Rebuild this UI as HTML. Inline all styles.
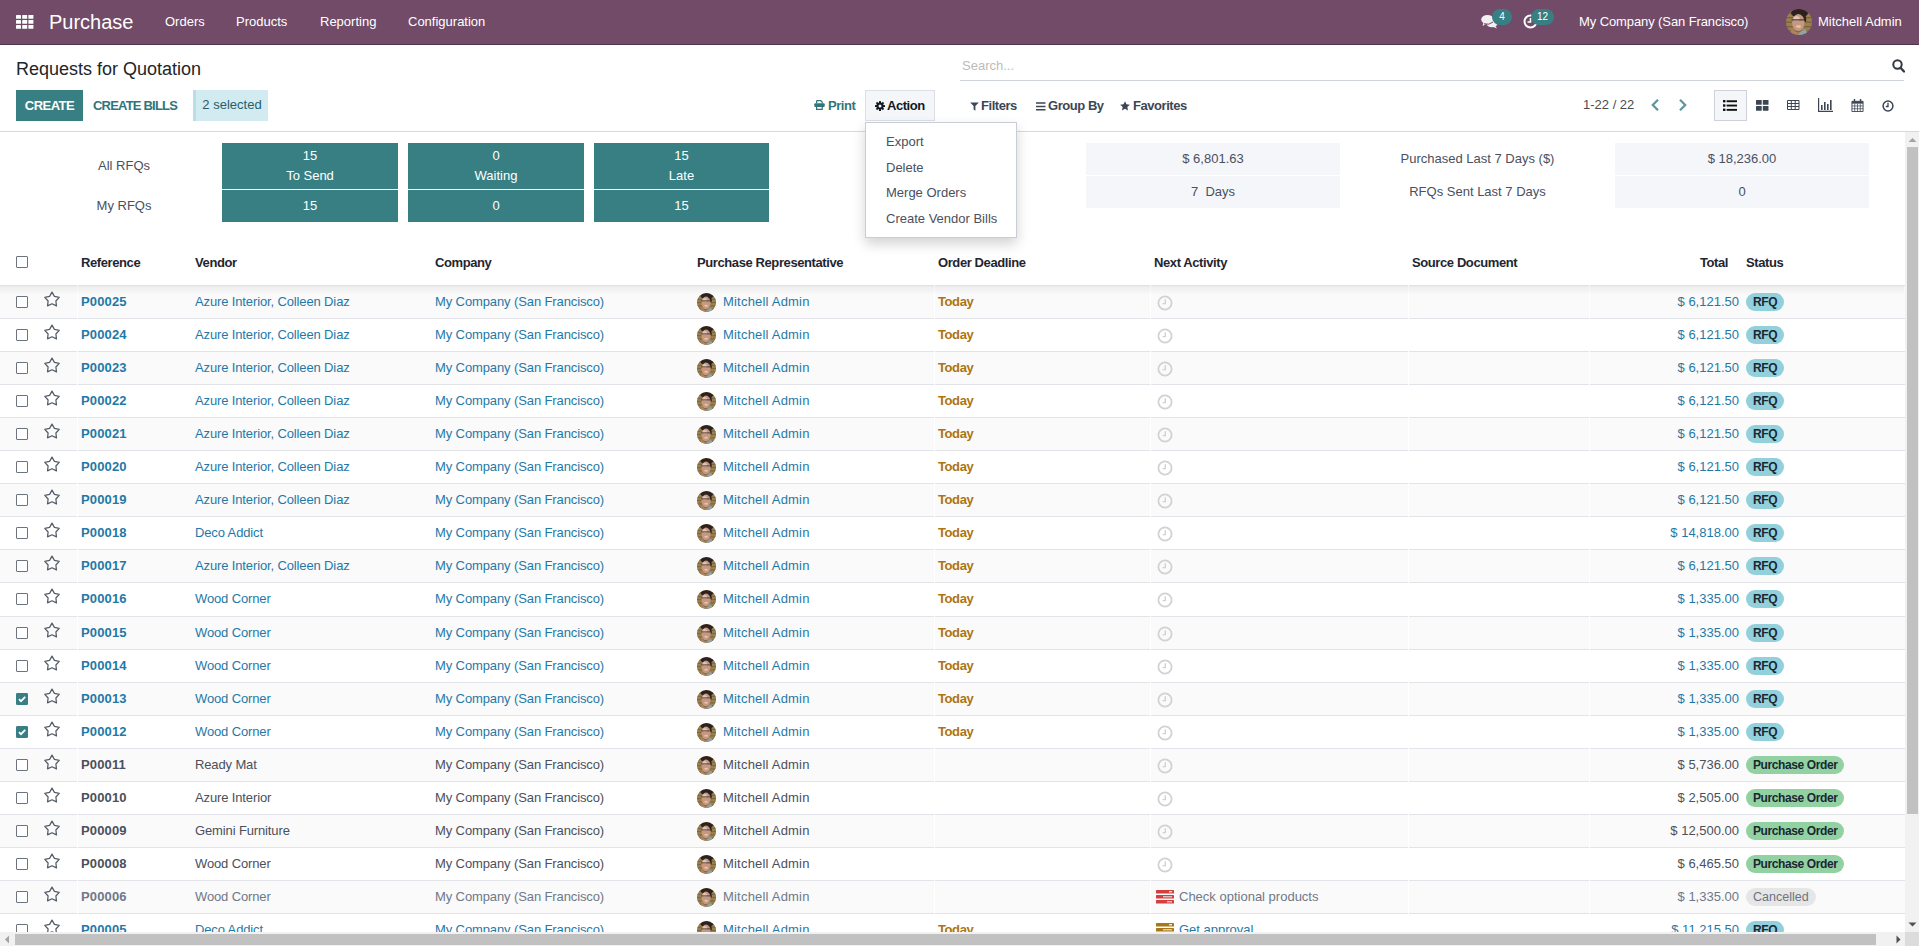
<!DOCTYPE html>
<html><head><meta charset="utf-8">
<style>
*{box-sizing:border-box;margin:0;padding:0}
html,body{width:1919px;height:946px;overflow:hidden;background:#fff}
body{position:relative;font-family:"Liberation Sans",sans-serif;font-size:13px;color:#495060}
.abs{position:absolute;white-space:nowrap}
/* navbar */
.nav{position:absolute;left:0;top:0;width:1919px;height:45px;background:#714b67;border-bottom:1px solid #4f3349;color:#fff}
.nav .t{position:absolute;white-space:nowrap;line-height:16px;top:14px;color:#fff}
.brand{font-size:20px;line-height:24px!important;top:10px!important}
.nbadge{position:absolute;height:16px;border-radius:8px;background:#387f84;color:#fff;font-size:10px;line-height:16px;text-align:center;top:9px}
.av{display:inline-block;border-radius:50%;background:radial-gradient(circle at 50% 42%,#e0b9a0 0,#c89479 22%,#6b4a34 45%,#8a6a48 62%,#5d5142 100%);vertical-align:middle}
/* control panel */
.title{position:absolute;left:16px;top:58px;font-size:18px;line-height:22px;color:#212529;white-space:nowrap}
.search{position:absolute;left:960px;top:50px;width:944px;height:31px;border-bottom:1px solid #ced4da}
.search .ph{position:absolute;left:2px;top:8px;color:#bcbcbc;font-size:13px;line-height:16px}
.btn{position:absolute;top:90px;height:31px;line-height:31px;font-weight:700;font-size:13px;white-space:nowrap}
.create{left:16px;width:67px;background:#387f84;color:#fff;text-align:center;letter-spacing:-0.5px}
.cbills{left:93px;color:#2f767c;letter-spacing:-0.8px}
.sel{left:193px;width:75px;background:#d1ebf0;border-left:3px solid #b7dfe7;color:#24606b;font-weight:400;text-align:center;line-height:29px}
.tool{position:absolute;top:98px;line-height:16px;white-space:nowrap;color:#3d4654;font-weight:700;letter-spacing:-0.45px}
.actbtn{position:absolute;left:865px;top:90px;width:70px;height:31px;background:#f5f6f9;border:1px solid #dcdfe5}
.cpline{position:absolute;left:0;top:131px;width:1919px;height:1px;background:#d6d9de}
/* dashboard */
.dl{position:absolute;white-space:nowrap;text-align:center;line-height:16px;color:#495060}
.tb{position:absolute;background:#387f84;color:#fff;text-align:center;line-height:20px}
.gb{position:absolute;background:#f5f6fa;text-align:center;color:#495060;line-height:32px}
/* table */
.th{position:absolute;top:255px;line-height:16px;font-weight:700;color:#1f2630;white-space:nowrap;letter-spacing:-0.4px}
.hline{position:absolute;left:0;top:285px;width:1905px;height:1px;background:#dee2e6}
.row{position:absolute;left:0;width:1905px;background:#fff}
.rb{position:absolute;left:0;width:1905px;height:1px;background:#e2e3e8}
.row.odd{background:#fafafa}
.row .c{position:absolute;top:0;height:32px;line-height:32px;white-space:nowrap}
.gap{position:absolute;top:-1px;width:1px;height:34px;background:#fff}
.c0{left:16px}
.cb{position:absolute;top:10px;left:0;width:12px;height:12px;border:1px solid #6c7480;border-radius:1px;background:#fff}
.cb.on{background:#387f84;border-color:#387f84}
.cb.on svg{position:absolute;left:-1px;top:-1px}
.c1{left:44px}
.star{position:absolute;top:5px;left:0}
.cref{left:81px;font-weight:700;letter-spacing:0.15px}
.cven{left:195px;letter-spacing:-0.13px}
.ccom{left:435px;letter-spacing:-0.11px}
.crep{left:697px}
.crep .av{position:absolute;left:0;top:7px}
.crep .rn{position:absolute;left:26px;letter-spacing:0.2px}
.cdl{left:938px}
.today{font-weight:700;color:#ad7410;letter-spacing:-0.4px}
.cact{left:1154px}
.clk svg{position:absolute;left:3px;top:9px}
.acti svg{position:absolute;left:2px;top:9px}
.actt{position:absolute;left:25px}
.ctot{right:166px}
.cst{left:1746px}
.bdg{position:absolute;top:7px;height:18px;line-height:18px;border-radius:9px;padding:0 7px;font-weight:700;font-size:12px;color:#1a2733;letter-spacing:-0.4px}
.bdg.rfq{background:#92d0dc}
.bdg.po{background:#92d2a2}
.bdg.cn{background:#e6e6e6;color:#6b7280;font-weight:400;font-size:12.5px;letter-spacing:0}
.info .c{color:#1f79a7}
.info .c.cref{color:#1f79a7}
.norm .c{color:#4a505c}
.norm .cref{color:#4a505c}
.muted .c{color:#6f7888}
/* scrollbars */
.vsb{position:absolute;left:1905px;top:132px;width:14px;height:800px;background:#f1f1f1}
.vth{position:absolute;left:1907px;top:147px;width:11px;height:667px;background:#c1c1c1}
.hsb{position:absolute;left:0;top:932px;width:1905px;height:14px;background:#f1f1f1}
.hth{position:absolute;left:15px;top:934px;width:1861px;height:11px;background:#c1c1c1}
.corner{position:absolute;left:1905px;top:932px;width:14px;height:14px;background:#dcdcdc}
/* dropdown */
.dd{position:absolute;left:865px;top:122px;width:152px;height:116px;background:#fff;border:1px solid #c9cdd5;box-shadow:0 6px 12px rgba(0,0,0,.175)}
.dd .it{position:absolute;left:20px;line-height:16px;color:#495060;white-space:nowrap}
</style></head><body>
<svg width="0" height="0" style="position:absolute"><defs>
<symbol id="avs" viewBox="0 0 26 26">
<clipPath id="avc"><circle cx="13" cy="13" r="13"/></clipPath>
<g clip-path="url(#avc)">
<rect width="26" height="26" fill="#9a8150"/>
<g fill="#6e5a36" opacity=".75"><rect y="3.5" width="26" height="1.3"/><rect y="8" width="26" height="1.3"/><rect y="12.5" width="26" height="1.3"/><rect y="17" width="26" height="1.3"/><rect y="21.5" width="26" height="1.3"/></g>
<ellipse cx="13.5" cy="4" rx="8.5" ry="4.6" fill="#2b2220"/>
<path d="M17 4 Q21 6 20 13 L17.5 12Z" fill="#2b2220"/>
<ellipse cx="12.3" cy="13.5" rx="6.2" ry="8.6" fill="#c7987f"/>
<ellipse cx="10.5" cy="9.5" rx="3.2" ry="2.6" fill="#e3cfc8" opacity=".8"/>
<path d="M5.5 10.8 H18.5" stroke="#4a3a36" stroke-width="1.3"/>
<ellipse cx="12.5" cy="17.5" rx="2.6" ry="1.3" fill="#e6c2b8"/>
<path d="M3 26 L6 20 Q10 22 12 26Z" fill="#b5805f"/>
<path d="M12 26 Q14 22 19 20 L23 26Z" fill="#8fa2a8"/>
</g>
</symbol></defs></svg>

<div class="nav">
  <svg class="abs" style="left:16px;top:15px" width="18" height="14" viewBox="0 0 18 14"><g fill="#fff"><rect x="0" y="0" width="5" height="3.8" rx=".4"/><rect x="6.2" y="0" width="5" height="3.8" rx=".4"/><rect x="12.4" y="0" width="5" height="3.8" rx=".4"/><rect x="0" y="5" width="5" height="3.8" rx=".4"/><rect x="6.2" y="5" width="5" height="3.8" rx=".4"/><rect x="12.4" y="5" width="5" height="3.8" rx=".4"/><rect x="0" y="10" width="5" height="3.8" rx=".4"/><rect x="6.2" y="10" width="5" height="3.8" rx=".4"/><rect x="12.4" y="10" width="5" height="3.8" rx=".4"/></g></svg>
  <div class="t brand" style="left:49px">Purchase</div>
  <div class="t" style="left:165px">Orders</div>
  <div class="t" style="left:236px">Products</div>
  <div class="t" style="left:320px">Reporting</div>
  <div class="t" style="left:408px">Configuration</div>

  <svg class="abs" style="left:1481px;top:14px" width="17" height="15" viewBox="0 0 17 15">
    <ellipse cx="6.5" cy="5.5" rx="6.3" ry="4.6" fill="#f3eef2"/><path d="M2.5 8.5 L1.5 12 L6 9.5Z" fill="#f3eef2"/>
    <ellipse cx="11" cy="9.5" rx="5.5" ry="3.8" fill="#f3eef2"/><path d="M14 11.5 L16 14.5 L11 12.5Z" fill="#f3eef2"/>
    <path d="M3 9.8 Q8 11.5 12 8" stroke="#714b67" stroke-width="1" fill="none"/>
  </svg>
  <div class="nbadge" style="left:1492px;width:20px">4</div>
  <svg class="abs" style="left:1523px;top:14px" width="15" height="15" viewBox="0 0 15 15">
    <circle cx="7.5" cy="7.5" r="6" fill="none" stroke="#fff" stroke-width="2"/><path d="M7.5 4 V8 H4.5" stroke="#fff" stroke-width="1.6" fill="none"/>
  </svg>
  <div class="nbadge" style="left:1531px;width:23px">12</div>
  <div class="t" style="left:1579px;letter-spacing:-0.1px">My Company (San Francisco)</div>
  <svg class="abs" style="left:1786px;top:9px" width="26" height="26"><use href="#avs"/></svg>
  <div class="t" style="left:1818px">Mitchell Admin</div>
</div>

<div class="title">Requests for Quotation</div>
<div class="search"><span class="ph">Search...</span>
  <svg class="abs" style="left:932px;top:9px" width="13" height="14" viewBox="0 0 13 14"><circle cx="5.5" cy="5.5" r="4.2" fill="none" stroke="#343a40" stroke-width="2"/><path d="M8.5 8.8 L12 12.5" stroke="#343a40" stroke-width="2.4" stroke-linecap="round"/></svg>
</div>

<div class="btn create">CREATE</div>
<div class="btn cbills">CREATE BILLS</div>
<div class="btn sel">2 selected</div>

<svg class="abs" style="left:814px;top:100px" width="11" height="10" viewBox="0 0 11 10"><path d="M2.6 3.2 V1.2 Q2.6 0.6 3.2 0.6 H6.8 L8.2 2 V3.2" fill="none" stroke="#2f767c" stroke-width="1.2"/><rect x="0.3" y="3.3" width="10.4" height="3.6" rx="1" fill="#2f767c"/><path d="M2.6 6.6 V9.3 H8.2 V6.6" fill="none" stroke="#2f767c" stroke-width="1.2"/></svg>
<div class="tool" style="left:828px;color:#2f767c">Print</div>
<div class="actbtn"></div>
<svg class="abs" style="left:875px;top:101px" width="10" height="10" viewBox="0 0 20 20"><g fill="#111a24"><rect x="8" y="0" width="4" height="20" rx=".5"/><rect x="8" y="0" width="4" height="20" rx=".5" transform="rotate(45 10 10)"/><rect x="8" y="0" width="4" height="20" rx=".5" transform="rotate(90 10 10)"/><rect x="8" y="0" width="4" height="20" rx=".5" transform="rotate(135 10 10)"/><circle cx="10" cy="10" r="7.2"/></g><circle cx="10" cy="10" r="3" fill="#f5f6f9"/></svg>
<div class="tool" style="left:887px;color:#111a24">Action</div>

<svg class="abs" style="left:970px;top:102px" width="9" height="9" viewBox="0 0 9 9"><path d="M0.2 0.4 H8.8 L5.4 4 V8.8 L3.6 7.6 V4Z" fill="#3d4654"/></svg>
<div class="tool" style="left:981px">Filters</div>
<svg class="abs" style="left:1036px;top:102px" width="10" height="9" viewBox="0 0 10 9"><path d="M0 1 H9.5 M0 4.4 H9.5 M0 7.8 H9.5" stroke="#3d4654" stroke-width="1.5"/></svg>
<div class="tool" style="left:1048px">Group By</div>
<svg class="abs" style="left:1120px;top:101px" width="10" height="10" viewBox="0 0 16 16"><path d="M8 0.3 L10.3 5.3 L15.7 5.9 L11.7 9.6 L12.8 15 L8 12.3 L3.2 15 L4.3 9.6 L0.3 5.9 L5.7 5.3Z" fill="#3d4654"/></svg>
<div class="tool" style="left:1133px">Favorites</div>

<div class="abs" style="left:1583px;top:97px;line-height:16px;color:#4c4c4c">1-22 / 22</div>
<svg class="abs" style="left:1650px;top:98px" width="10" height="14" viewBox="0 0 10 14"><path d="M8 1.8 L2.8 7 L8 12.2" fill="none" stroke="#5f9799" stroke-width="2.3"/></svg>
<svg class="abs" style="left:1678px;top:98px" width="10" height="14" viewBox="0 0 10 14"><path d="M2 1.8 L7.2 7 L2 12.2" fill="none" stroke="#5f9799" stroke-width="2.3"/></svg>

<div class="abs" style="left:1714px;top:90px;width:33px;height:31px;background:#f5f6f9;border:1px solid #cfd3d9"></div>
<svg class="abs" style="left:1723px;top:100px" width="14" height="11" viewBox="0 0 14 11"><g fill="#111"><rect x="0" y="0" width="2.4" height="2.4"/><rect x="0" y="4.3" width="2.4" height="2.4"/><rect x="0" y="8.6" width="2.4" height="2.4"/><rect x="3.6" y="0.3" width="10.4" height="1.9"/><rect x="3.6" y="4.6" width="10.4" height="1.9"/><rect x="3.6" y="8.9" width="10.4" height="1.9"/></g></svg>
<svg class="abs" style="left:1756px;top:100px" width="13" height="11" viewBox="0 0 13 11"><g fill="#3c4653"><rect x="0" y="0" width="5.7" height="4.8" rx=".6"/><rect x="6.8" y="0" width="5.7" height="4.8" rx=".6"/><rect x="0" y="5.9" width="5.7" height="4.8" rx=".6"/><rect x="6.8" y="5.9" width="5.7" height="4.8" rx=".6"/></g></svg>
<svg class="abs" style="left:1787px;top:100px" width="13" height="10" viewBox="0 0 13 10"><path d="M0.5 0.5 H12 V9.5 H0.5Z M0.5 3.5 H12 M0.5 6.5 H12 M4.3 0.5 V9.5 M8.2 0.5 V9.5" fill="none" stroke="#3c4653" stroke-width="1"/></svg>
<svg class="abs" style="left:1818px;top:98px" width="15" height="14" viewBox="0 0 15 14"><path d="M0.6 0 V13.4 H15" fill="none" stroke="#3c4653" stroke-width="1.2"/><g fill="#3c4653"><rect x="3" y="7" width="1.6" height="5"/><rect x="6" y="4" width="1.6" height="8"/><rect x="9" y="6" width="1.6" height="6"/><rect x="12" y="2" width="1.6" height="10"/></g></svg>
<svg class="abs" style="left:1851px;top:99px" width="13" height="13" viewBox="0 0 13 14"><path d="M0.5 2.5 H12.5 V13.5 H0.5Z" fill="none" stroke="#3c4653" stroke-width="1"/><rect x="0.5" y="2.5" width="12" height="2.5" fill="#3c4653"/><path d="M0.5 7.5 H12.5 M0.5 10.5 H12.5 M3.5 5 V13.5 M6.5 5 V13.5 M9.5 5 V13.5" stroke="#3c4653" stroke-width=".8"/><rect x="2.5" y="0" width="1.5" height="3" fill="#3c4653"/><rect x="9" y="0" width="1.5" height="3" fill="#3c4653"/></svg>
<svg class="abs" style="left:1882px;top:100px" width="12" height="12" viewBox="0 0 12 12"><circle cx="6" cy="6" r="4.9" fill="none" stroke="#3c4653" stroke-width="1.5"/><path d="M6 2.8 V6.5 H3.8" fill="none" stroke="#3c4653" stroke-width="1.3"/></svg>

<div class="cpline"></div>

<!-- dashboard -->
<div class="dl" style="left:64px;top:158px;width:120px">All RFQs</div>
<div class="dl" style="left:64px;top:198px;width:120px">My RFQs</div>
<div class="tb" style="left:222px;top:143px;width:176px;height:46px;padding-top:3px">15<br>To Send</div>
<div class="tb" style="left:408px;top:143px;width:176px;height:46px;padding-top:3px">0<br>Waiting</div>
<div class="tb" style="left:594px;top:143px;width:175px;height:46px;padding-top:3px">15<br>Late</div>
<div class="tb" style="left:222px;top:190px;width:176px;height:32px;line-height:32px">15</div>
<div class="tb" style="left:408px;top:190px;width:176px;height:32px;line-height:32px">0</div>
<div class="tb" style="left:594px;top:190px;width:175px;height:32px;line-height:32px">15</div>

<div class="gb" style="left:1086px;top:143px;width:254px;height:32px">$ 6,801.63</div>
<div class="gb" style="left:1086px;top:176px;width:254px;height:32px">7&nbsp; Days</div>
<div class="dl" style="left:1340px;top:151px;width:275px">Purchased Last 7 Days ($)</div>
<div class="dl" style="left:1340px;top:184px;width:275px">RFQs Sent Last 7 Days</div>
<div class="gb" style="left:1615px;top:143px;width:254px;height:32px">$ 18,236.00</div>
<div class="gb" style="left:1615px;top:176px;width:254px;height:32px">0</div>

<!-- table header -->
<div class="cb" style="position:absolute;left:16px;top:256px"></div>
<div class="th" style="left:81px">Reference</div>
<div class="th" style="left:195px">Vendor</div>
<div class="th" style="left:435px">Company</div>
<div class="th" style="left:697px">Purchase Representative</div>
<div class="th" style="left:938px">Order Deadline</div>
<div class="th" style="left:1154px">Next Activity</div>
<div class="th" style="left:1412px">Source Document</div>
<div class="th" style="right:191px">Total</div>
<div class="th" style="left:1746px">Status</div>
<div class="hline"></div>
<div style="position:absolute;left:0;top:286px;width:1904px;height:9px;background:linear-gradient(rgba(0,0,0,.055),rgba(0,0,0,0));z-index:2"></div>

<div class="row info odd" style="top:286px;height:32px">
<div class="c c0"><span class="cb"></span></div><div class="c c1"><svg class="star" width="16" height="17" viewBox="0 0 16 17"><path d="M8.00 1.10 L10.41 5.38 L15.23 6.35 L11.90 9.97 L12.47 14.85 L8.00 12.80 L3.53 14.85 L4.10 9.97 L0.77 6.35 L5.59 5.38Z" fill="none" stroke="#545c68" stroke-width="1.25" stroke-linejoin="round"/></svg></div>
<div class="c cref">P00025</div><div class="c cven">Azure Interior, Colleen Diaz</div>
<div class="c ccom">My Company (San Francisco)</div>
<div class="c crep"><svg class="av" width="19" height="19"><use href="#avs"/></svg><span class="rn">Mitchell Admin</span></div>
<div class="c cdl"><span class="today">Today</span></div>
<div class="c cact"><span class="clk"><svg width="16" height="16" viewBox="0 0 16 16"><circle cx="8" cy="8" r="6.6" fill="none" stroke="#d2d2d2" stroke-width="1.8"/><path d="M8.3 4.2 V8.6 H5.6" fill="none" stroke="#d2d2d2" stroke-width="1.4"/></svg></span></div>
<div class="c ctot">$ 6,121.50</div>
<div class="c cst"><span class="bdg rfq">RFQ</span></div>
<div class="gap" style="left:77px"></div><div class="gap" style="left:934px"></div><div class="gap" style="left:1150px"></div><div class="gap" style="left:1408px"></div><div class="gap" style="left:1589px"></div>
</div>
<div class="rb" style="top:318px"></div>
<div class="row info" style="top:319px;height:32px">
<div class="c c0"><span class="cb"></span></div><div class="c c1"><svg class="star" width="16" height="17" viewBox="0 0 16 17"><path d="M8.00 1.10 L10.41 5.38 L15.23 6.35 L11.90 9.97 L12.47 14.85 L8.00 12.80 L3.53 14.85 L4.10 9.97 L0.77 6.35 L5.59 5.38Z" fill="none" stroke="#545c68" stroke-width="1.25" stroke-linejoin="round"/></svg></div>
<div class="c cref">P00024</div><div class="c cven">Azure Interior, Colleen Diaz</div>
<div class="c ccom">My Company (San Francisco)</div>
<div class="c crep"><svg class="av" width="19" height="19"><use href="#avs"/></svg><span class="rn">Mitchell Admin</span></div>
<div class="c cdl"><span class="today">Today</span></div>
<div class="c cact"><span class="clk"><svg width="16" height="16" viewBox="0 0 16 16"><circle cx="8" cy="8" r="6.6" fill="none" stroke="#d2d2d2" stroke-width="1.8"/><path d="M8.3 4.2 V8.6 H5.6" fill="none" stroke="#d2d2d2" stroke-width="1.4"/></svg></span></div>
<div class="c ctot">$ 6,121.50</div>
<div class="c cst"><span class="bdg rfq">RFQ</span></div>
<div class="gap" style="left:77px"></div><div class="gap" style="left:934px"></div><div class="gap" style="left:1150px"></div><div class="gap" style="left:1408px"></div><div class="gap" style="left:1589px"></div>
</div>
<div class="rb" style="top:351px"></div>
<div class="row info odd" style="top:352px;height:32px">
<div class="c c0"><span class="cb"></span></div><div class="c c1"><svg class="star" width="16" height="17" viewBox="0 0 16 17"><path d="M8.00 1.10 L10.41 5.38 L15.23 6.35 L11.90 9.97 L12.47 14.85 L8.00 12.80 L3.53 14.85 L4.10 9.97 L0.77 6.35 L5.59 5.38Z" fill="none" stroke="#545c68" stroke-width="1.25" stroke-linejoin="round"/></svg></div>
<div class="c cref">P00023</div><div class="c cven">Azure Interior, Colleen Diaz</div>
<div class="c ccom">My Company (San Francisco)</div>
<div class="c crep"><svg class="av" width="19" height="19"><use href="#avs"/></svg><span class="rn">Mitchell Admin</span></div>
<div class="c cdl"><span class="today">Today</span></div>
<div class="c cact"><span class="clk"><svg width="16" height="16" viewBox="0 0 16 16"><circle cx="8" cy="8" r="6.6" fill="none" stroke="#d2d2d2" stroke-width="1.8"/><path d="M8.3 4.2 V8.6 H5.6" fill="none" stroke="#d2d2d2" stroke-width="1.4"/></svg></span></div>
<div class="c ctot">$ 6,121.50</div>
<div class="c cst"><span class="bdg rfq">RFQ</span></div>
<div class="gap" style="left:77px"></div><div class="gap" style="left:934px"></div><div class="gap" style="left:1150px"></div><div class="gap" style="left:1408px"></div><div class="gap" style="left:1589px"></div>
</div>
<div class="rb" style="top:384px"></div>
<div class="row info" style="top:385px;height:32px">
<div class="c c0"><span class="cb"></span></div><div class="c c1"><svg class="star" width="16" height="17" viewBox="0 0 16 17"><path d="M8.00 1.10 L10.41 5.38 L15.23 6.35 L11.90 9.97 L12.47 14.85 L8.00 12.80 L3.53 14.85 L4.10 9.97 L0.77 6.35 L5.59 5.38Z" fill="none" stroke="#545c68" stroke-width="1.25" stroke-linejoin="round"/></svg></div>
<div class="c cref">P00022</div><div class="c cven">Azure Interior, Colleen Diaz</div>
<div class="c ccom">My Company (San Francisco)</div>
<div class="c crep"><svg class="av" width="19" height="19"><use href="#avs"/></svg><span class="rn">Mitchell Admin</span></div>
<div class="c cdl"><span class="today">Today</span></div>
<div class="c cact"><span class="clk"><svg width="16" height="16" viewBox="0 0 16 16"><circle cx="8" cy="8" r="6.6" fill="none" stroke="#d2d2d2" stroke-width="1.8"/><path d="M8.3 4.2 V8.6 H5.6" fill="none" stroke="#d2d2d2" stroke-width="1.4"/></svg></span></div>
<div class="c ctot">$ 6,121.50</div>
<div class="c cst"><span class="bdg rfq">RFQ</span></div>
<div class="gap" style="left:77px"></div><div class="gap" style="left:934px"></div><div class="gap" style="left:1150px"></div><div class="gap" style="left:1408px"></div><div class="gap" style="left:1589px"></div>
</div>
<div class="rb" style="top:417px"></div>
<div class="row info odd" style="top:418px;height:32px">
<div class="c c0"><span class="cb"></span></div><div class="c c1"><svg class="star" width="16" height="17" viewBox="0 0 16 17"><path d="M8.00 1.10 L10.41 5.38 L15.23 6.35 L11.90 9.97 L12.47 14.85 L8.00 12.80 L3.53 14.85 L4.10 9.97 L0.77 6.35 L5.59 5.38Z" fill="none" stroke="#545c68" stroke-width="1.25" stroke-linejoin="round"/></svg></div>
<div class="c cref">P00021</div><div class="c cven">Azure Interior, Colleen Diaz</div>
<div class="c ccom">My Company (San Francisco)</div>
<div class="c crep"><svg class="av" width="19" height="19"><use href="#avs"/></svg><span class="rn">Mitchell Admin</span></div>
<div class="c cdl"><span class="today">Today</span></div>
<div class="c cact"><span class="clk"><svg width="16" height="16" viewBox="0 0 16 16"><circle cx="8" cy="8" r="6.6" fill="none" stroke="#d2d2d2" stroke-width="1.8"/><path d="M8.3 4.2 V8.6 H5.6" fill="none" stroke="#d2d2d2" stroke-width="1.4"/></svg></span></div>
<div class="c ctot">$ 6,121.50</div>
<div class="c cst"><span class="bdg rfq">RFQ</span></div>
<div class="gap" style="left:77px"></div><div class="gap" style="left:934px"></div><div class="gap" style="left:1150px"></div><div class="gap" style="left:1408px"></div><div class="gap" style="left:1589px"></div>
</div>
<div class="rb" style="top:450px"></div>
<div class="row info" style="top:451px;height:32px">
<div class="c c0"><span class="cb"></span></div><div class="c c1"><svg class="star" width="16" height="17" viewBox="0 0 16 17"><path d="M8.00 1.10 L10.41 5.38 L15.23 6.35 L11.90 9.97 L12.47 14.85 L8.00 12.80 L3.53 14.85 L4.10 9.97 L0.77 6.35 L5.59 5.38Z" fill="none" stroke="#545c68" stroke-width="1.25" stroke-linejoin="round"/></svg></div>
<div class="c cref">P00020</div><div class="c cven">Azure Interior, Colleen Diaz</div>
<div class="c ccom">My Company (San Francisco)</div>
<div class="c crep"><svg class="av" width="19" height="19"><use href="#avs"/></svg><span class="rn">Mitchell Admin</span></div>
<div class="c cdl"><span class="today">Today</span></div>
<div class="c cact"><span class="clk"><svg width="16" height="16" viewBox="0 0 16 16"><circle cx="8" cy="8" r="6.6" fill="none" stroke="#d2d2d2" stroke-width="1.8"/><path d="M8.3 4.2 V8.6 H5.6" fill="none" stroke="#d2d2d2" stroke-width="1.4"/></svg></span></div>
<div class="c ctot">$ 6,121.50</div>
<div class="c cst"><span class="bdg rfq">RFQ</span></div>
<div class="gap" style="left:77px"></div><div class="gap" style="left:934px"></div><div class="gap" style="left:1150px"></div><div class="gap" style="left:1408px"></div><div class="gap" style="left:1589px"></div>
</div>
<div class="rb" style="top:483px"></div>
<div class="row info odd" style="top:484px;height:32px">
<div class="c c0"><span class="cb"></span></div><div class="c c1"><svg class="star" width="16" height="17" viewBox="0 0 16 17"><path d="M8.00 1.10 L10.41 5.38 L15.23 6.35 L11.90 9.97 L12.47 14.85 L8.00 12.80 L3.53 14.85 L4.10 9.97 L0.77 6.35 L5.59 5.38Z" fill="none" stroke="#545c68" stroke-width="1.25" stroke-linejoin="round"/></svg></div>
<div class="c cref">P00019</div><div class="c cven">Azure Interior, Colleen Diaz</div>
<div class="c ccom">My Company (San Francisco)</div>
<div class="c crep"><svg class="av" width="19" height="19"><use href="#avs"/></svg><span class="rn">Mitchell Admin</span></div>
<div class="c cdl"><span class="today">Today</span></div>
<div class="c cact"><span class="clk"><svg width="16" height="16" viewBox="0 0 16 16"><circle cx="8" cy="8" r="6.6" fill="none" stroke="#d2d2d2" stroke-width="1.8"/><path d="M8.3 4.2 V8.6 H5.6" fill="none" stroke="#d2d2d2" stroke-width="1.4"/></svg></span></div>
<div class="c ctot">$ 6,121.50</div>
<div class="c cst"><span class="bdg rfq">RFQ</span></div>
<div class="gap" style="left:77px"></div><div class="gap" style="left:934px"></div><div class="gap" style="left:1150px"></div><div class="gap" style="left:1408px"></div><div class="gap" style="left:1589px"></div>
</div>
<div class="rb" style="top:516px"></div>
<div class="row info" style="top:517px;height:32px">
<div class="c c0"><span class="cb"></span></div><div class="c c1"><svg class="star" width="16" height="17" viewBox="0 0 16 17"><path d="M8.00 1.10 L10.41 5.38 L15.23 6.35 L11.90 9.97 L12.47 14.85 L8.00 12.80 L3.53 14.85 L4.10 9.97 L0.77 6.35 L5.59 5.38Z" fill="none" stroke="#545c68" stroke-width="1.25" stroke-linejoin="round"/></svg></div>
<div class="c cref">P00018</div><div class="c cven">Deco Addict</div>
<div class="c ccom">My Company (San Francisco)</div>
<div class="c crep"><svg class="av" width="19" height="19"><use href="#avs"/></svg><span class="rn">Mitchell Admin</span></div>
<div class="c cdl"><span class="today">Today</span></div>
<div class="c cact"><span class="clk"><svg width="16" height="16" viewBox="0 0 16 16"><circle cx="8" cy="8" r="6.6" fill="none" stroke="#d2d2d2" stroke-width="1.8"/><path d="M8.3 4.2 V8.6 H5.6" fill="none" stroke="#d2d2d2" stroke-width="1.4"/></svg></span></div>
<div class="c ctot">$ 14,818.00</div>
<div class="c cst"><span class="bdg rfq">RFQ</span></div>
<div class="gap" style="left:77px"></div><div class="gap" style="left:934px"></div><div class="gap" style="left:1150px"></div><div class="gap" style="left:1408px"></div><div class="gap" style="left:1589px"></div>
</div>
<div class="rb" style="top:549px"></div>
<div class="row info odd" style="top:550px;height:32px">
<div class="c c0"><span class="cb"></span></div><div class="c c1"><svg class="star" width="16" height="17" viewBox="0 0 16 17"><path d="M8.00 1.10 L10.41 5.38 L15.23 6.35 L11.90 9.97 L12.47 14.85 L8.00 12.80 L3.53 14.85 L4.10 9.97 L0.77 6.35 L5.59 5.38Z" fill="none" stroke="#545c68" stroke-width="1.25" stroke-linejoin="round"/></svg></div>
<div class="c cref">P00017</div><div class="c cven">Azure Interior, Colleen Diaz</div>
<div class="c ccom">My Company (San Francisco)</div>
<div class="c crep"><svg class="av" width="19" height="19"><use href="#avs"/></svg><span class="rn">Mitchell Admin</span></div>
<div class="c cdl"><span class="today">Today</span></div>
<div class="c cact"><span class="clk"><svg width="16" height="16" viewBox="0 0 16 16"><circle cx="8" cy="8" r="6.6" fill="none" stroke="#d2d2d2" stroke-width="1.8"/><path d="M8.3 4.2 V8.6 H5.6" fill="none" stroke="#d2d2d2" stroke-width="1.4"/></svg></span></div>
<div class="c ctot">$ 6,121.50</div>
<div class="c cst"><span class="bdg rfq">RFQ</span></div>
<div class="gap" style="left:77px"></div><div class="gap" style="left:934px"></div><div class="gap" style="left:1150px"></div><div class="gap" style="left:1408px"></div><div class="gap" style="left:1589px"></div>
</div>
<div class="rb" style="top:582px"></div>
<div class="row info" style="top:583px;height:33px">
<div class="c c0"><span class="cb"></span></div><div class="c c1"><svg class="star" width="16" height="17" viewBox="0 0 16 17"><path d="M8.00 1.10 L10.41 5.38 L15.23 6.35 L11.90 9.97 L12.47 14.85 L8.00 12.80 L3.53 14.85 L4.10 9.97 L0.77 6.35 L5.59 5.38Z" fill="none" stroke="#545c68" stroke-width="1.25" stroke-linejoin="round"/></svg></div>
<div class="c cref">P00016</div><div class="c cven">Wood Corner</div>
<div class="c ccom">My Company (San Francisco)</div>
<div class="c crep"><svg class="av" width="19" height="19"><use href="#avs"/></svg><span class="rn">Mitchell Admin</span></div>
<div class="c cdl"><span class="today">Today</span></div>
<div class="c cact"><span class="clk"><svg width="16" height="16" viewBox="0 0 16 16"><circle cx="8" cy="8" r="6.6" fill="none" stroke="#d2d2d2" stroke-width="1.8"/><path d="M8.3 4.2 V8.6 H5.6" fill="none" stroke="#d2d2d2" stroke-width="1.4"/></svg></span></div>
<div class="c ctot">$ 1,335.00</div>
<div class="c cst"><span class="bdg rfq">RFQ</span></div>
<div class="gap" style="left:77px"></div><div class="gap" style="left:934px"></div><div class="gap" style="left:1150px"></div><div class="gap" style="left:1408px"></div><div class="gap" style="left:1589px"></div>
</div>
<div class="rb" style="top:616px"></div>
<div class="row info odd" style="top:617px;height:32px">
<div class="c c0"><span class="cb"></span></div><div class="c c1"><svg class="star" width="16" height="17" viewBox="0 0 16 17"><path d="M8.00 1.10 L10.41 5.38 L15.23 6.35 L11.90 9.97 L12.47 14.85 L8.00 12.80 L3.53 14.85 L4.10 9.97 L0.77 6.35 L5.59 5.38Z" fill="none" stroke="#545c68" stroke-width="1.25" stroke-linejoin="round"/></svg></div>
<div class="c cref">P00015</div><div class="c cven">Wood Corner</div>
<div class="c ccom">My Company (San Francisco)</div>
<div class="c crep"><svg class="av" width="19" height="19"><use href="#avs"/></svg><span class="rn">Mitchell Admin</span></div>
<div class="c cdl"><span class="today">Today</span></div>
<div class="c cact"><span class="clk"><svg width="16" height="16" viewBox="0 0 16 16"><circle cx="8" cy="8" r="6.6" fill="none" stroke="#d2d2d2" stroke-width="1.8"/><path d="M8.3 4.2 V8.6 H5.6" fill="none" stroke="#d2d2d2" stroke-width="1.4"/></svg></span></div>
<div class="c ctot">$ 1,335.00</div>
<div class="c cst"><span class="bdg rfq">RFQ</span></div>
<div class="gap" style="left:77px"></div><div class="gap" style="left:934px"></div><div class="gap" style="left:1150px"></div><div class="gap" style="left:1408px"></div><div class="gap" style="left:1589px"></div>
</div>
<div class="rb" style="top:649px"></div>
<div class="row info" style="top:650px;height:32px">
<div class="c c0"><span class="cb"></span></div><div class="c c1"><svg class="star" width="16" height="17" viewBox="0 0 16 17"><path d="M8.00 1.10 L10.41 5.38 L15.23 6.35 L11.90 9.97 L12.47 14.85 L8.00 12.80 L3.53 14.85 L4.10 9.97 L0.77 6.35 L5.59 5.38Z" fill="none" stroke="#545c68" stroke-width="1.25" stroke-linejoin="round"/></svg></div>
<div class="c cref">P00014</div><div class="c cven">Wood Corner</div>
<div class="c ccom">My Company (San Francisco)</div>
<div class="c crep"><svg class="av" width="19" height="19"><use href="#avs"/></svg><span class="rn">Mitchell Admin</span></div>
<div class="c cdl"><span class="today">Today</span></div>
<div class="c cact"><span class="clk"><svg width="16" height="16" viewBox="0 0 16 16"><circle cx="8" cy="8" r="6.6" fill="none" stroke="#d2d2d2" stroke-width="1.8"/><path d="M8.3 4.2 V8.6 H5.6" fill="none" stroke="#d2d2d2" stroke-width="1.4"/></svg></span></div>
<div class="c ctot">$ 1,335.00</div>
<div class="c cst"><span class="bdg rfq">RFQ</span></div>
<div class="gap" style="left:77px"></div><div class="gap" style="left:934px"></div><div class="gap" style="left:1150px"></div><div class="gap" style="left:1408px"></div><div class="gap" style="left:1589px"></div>
</div>
<div class="rb" style="top:682px"></div>
<div class="row info odd" style="top:683px;height:32px">
<div class="c c0"><span class="cb on"><svg width="12" height="12" viewBox="0 0 12 12"><path d="M3 6.2 L5 8.2 L9.2 3.9" fill="none" stroke="#fff" stroke-width="1.8"/></svg></span></div><div class="c c1"><svg class="star" width="16" height="17" viewBox="0 0 16 17"><path d="M8.00 1.10 L10.41 5.38 L15.23 6.35 L11.90 9.97 L12.47 14.85 L8.00 12.80 L3.53 14.85 L4.10 9.97 L0.77 6.35 L5.59 5.38Z" fill="none" stroke="#545c68" stroke-width="1.25" stroke-linejoin="round"/></svg></div>
<div class="c cref">P00013</div><div class="c cven">Wood Corner</div>
<div class="c ccom">My Company (San Francisco)</div>
<div class="c crep"><svg class="av" width="19" height="19"><use href="#avs"/></svg><span class="rn">Mitchell Admin</span></div>
<div class="c cdl"><span class="today">Today</span></div>
<div class="c cact"><span class="clk"><svg width="16" height="16" viewBox="0 0 16 16"><circle cx="8" cy="8" r="6.6" fill="none" stroke="#d2d2d2" stroke-width="1.8"/><path d="M8.3 4.2 V8.6 H5.6" fill="none" stroke="#d2d2d2" stroke-width="1.4"/></svg></span></div>
<div class="c ctot">$ 1,335.00</div>
<div class="c cst"><span class="bdg rfq">RFQ</span></div>
<div class="gap" style="left:77px"></div><div class="gap" style="left:934px"></div><div class="gap" style="left:1150px"></div><div class="gap" style="left:1408px"></div><div class="gap" style="left:1589px"></div>
</div>
<div class="rb" style="top:715px"></div>
<div class="row info" style="top:716px;height:32px">
<div class="c c0"><span class="cb on"><svg width="12" height="12" viewBox="0 0 12 12"><path d="M3 6.2 L5 8.2 L9.2 3.9" fill="none" stroke="#fff" stroke-width="1.8"/></svg></span></div><div class="c c1"><svg class="star" width="16" height="17" viewBox="0 0 16 17"><path d="M8.00 1.10 L10.41 5.38 L15.23 6.35 L11.90 9.97 L12.47 14.85 L8.00 12.80 L3.53 14.85 L4.10 9.97 L0.77 6.35 L5.59 5.38Z" fill="none" stroke="#545c68" stroke-width="1.25" stroke-linejoin="round"/></svg></div>
<div class="c cref">P00012</div><div class="c cven">Wood Corner</div>
<div class="c ccom">My Company (San Francisco)</div>
<div class="c crep"><svg class="av" width="19" height="19"><use href="#avs"/></svg><span class="rn">Mitchell Admin</span></div>
<div class="c cdl"><span class="today">Today</span></div>
<div class="c cact"><span class="clk"><svg width="16" height="16" viewBox="0 0 16 16"><circle cx="8" cy="8" r="6.6" fill="none" stroke="#d2d2d2" stroke-width="1.8"/><path d="M8.3 4.2 V8.6 H5.6" fill="none" stroke="#d2d2d2" stroke-width="1.4"/></svg></span></div>
<div class="c ctot">$ 1,335.00</div>
<div class="c cst"><span class="bdg rfq">RFQ</span></div>
<div class="gap" style="left:77px"></div><div class="gap" style="left:934px"></div><div class="gap" style="left:1150px"></div><div class="gap" style="left:1408px"></div><div class="gap" style="left:1589px"></div>
</div>
<div class="rb" style="top:748px"></div>
<div class="row norm odd" style="top:749px;height:32px">
<div class="c c0"><span class="cb"></span></div><div class="c c1"><svg class="star" width="16" height="17" viewBox="0 0 16 17"><path d="M8.00 1.10 L10.41 5.38 L15.23 6.35 L11.90 9.97 L12.47 14.85 L8.00 12.80 L3.53 14.85 L4.10 9.97 L0.77 6.35 L5.59 5.38Z" fill="none" stroke="#545c68" stroke-width="1.25" stroke-linejoin="round"/></svg></div>
<div class="c cref">P00011</div><div class="c cven">Ready Mat</div>
<div class="c ccom">My Company (San Francisco)</div>
<div class="c crep"><svg class="av" width="19" height="19"><use href="#avs"/></svg><span class="rn">Mitchell Admin</span></div>
<div class="c cdl"></div>
<div class="c cact"><span class="clk"><svg width="16" height="16" viewBox="0 0 16 16"><circle cx="8" cy="8" r="6.6" fill="none" stroke="#d2d2d2" stroke-width="1.8"/><path d="M8.3 4.2 V8.6 H5.6" fill="none" stroke="#d2d2d2" stroke-width="1.4"/></svg></span></div>
<div class="c ctot">$ 5,736.00</div>
<div class="c cst"><span class="bdg po">Purchase Order</span></div>
<div class="gap" style="left:77px"></div><div class="gap" style="left:934px"></div><div class="gap" style="left:1150px"></div><div class="gap" style="left:1408px"></div><div class="gap" style="left:1589px"></div>
</div>
<div class="rb" style="top:781px"></div>
<div class="row norm" style="top:782px;height:32px">
<div class="c c0"><span class="cb"></span></div><div class="c c1"><svg class="star" width="16" height="17" viewBox="0 0 16 17"><path d="M8.00 1.10 L10.41 5.38 L15.23 6.35 L11.90 9.97 L12.47 14.85 L8.00 12.80 L3.53 14.85 L4.10 9.97 L0.77 6.35 L5.59 5.38Z" fill="none" stroke="#545c68" stroke-width="1.25" stroke-linejoin="round"/></svg></div>
<div class="c cref">P00010</div><div class="c cven">Azure Interior</div>
<div class="c ccom">My Company (San Francisco)</div>
<div class="c crep"><svg class="av" width="19" height="19"><use href="#avs"/></svg><span class="rn">Mitchell Admin</span></div>
<div class="c cdl"></div>
<div class="c cact"><span class="clk"><svg width="16" height="16" viewBox="0 0 16 16"><circle cx="8" cy="8" r="6.6" fill="none" stroke="#d2d2d2" stroke-width="1.8"/><path d="M8.3 4.2 V8.6 H5.6" fill="none" stroke="#d2d2d2" stroke-width="1.4"/></svg></span></div>
<div class="c ctot">$ 2,505.00</div>
<div class="c cst"><span class="bdg po">Purchase Order</span></div>
<div class="gap" style="left:77px"></div><div class="gap" style="left:934px"></div><div class="gap" style="left:1150px"></div><div class="gap" style="left:1408px"></div><div class="gap" style="left:1589px"></div>
</div>
<div class="rb" style="top:814px"></div>
<div class="row norm odd" style="top:815px;height:32px">
<div class="c c0"><span class="cb"></span></div><div class="c c1"><svg class="star" width="16" height="17" viewBox="0 0 16 17"><path d="M8.00 1.10 L10.41 5.38 L15.23 6.35 L11.90 9.97 L12.47 14.85 L8.00 12.80 L3.53 14.85 L4.10 9.97 L0.77 6.35 L5.59 5.38Z" fill="none" stroke="#545c68" stroke-width="1.25" stroke-linejoin="round"/></svg></div>
<div class="c cref">P00009</div><div class="c cven">Gemini Furniture</div>
<div class="c ccom">My Company (San Francisco)</div>
<div class="c crep"><svg class="av" width="19" height="19"><use href="#avs"/></svg><span class="rn">Mitchell Admin</span></div>
<div class="c cdl"></div>
<div class="c cact"><span class="clk"><svg width="16" height="16" viewBox="0 0 16 16"><circle cx="8" cy="8" r="6.6" fill="none" stroke="#d2d2d2" stroke-width="1.8"/><path d="M8.3 4.2 V8.6 H5.6" fill="none" stroke="#d2d2d2" stroke-width="1.4"/></svg></span></div>
<div class="c ctot">$ 12,500.00</div>
<div class="c cst"><span class="bdg po">Purchase Order</span></div>
<div class="gap" style="left:77px"></div><div class="gap" style="left:934px"></div><div class="gap" style="left:1150px"></div><div class="gap" style="left:1408px"></div><div class="gap" style="left:1589px"></div>
</div>
<div class="rb" style="top:847px"></div>
<div class="row norm" style="top:848px;height:32px">
<div class="c c0"><span class="cb"></span></div><div class="c c1"><svg class="star" width="16" height="17" viewBox="0 0 16 17"><path d="M8.00 1.10 L10.41 5.38 L15.23 6.35 L11.90 9.97 L12.47 14.85 L8.00 12.80 L3.53 14.85 L4.10 9.97 L0.77 6.35 L5.59 5.38Z" fill="none" stroke="#545c68" stroke-width="1.25" stroke-linejoin="round"/></svg></div>
<div class="c cref">P00008</div><div class="c cven">Wood Corner</div>
<div class="c ccom">My Company (San Francisco)</div>
<div class="c crep"><svg class="av" width="19" height="19"><use href="#avs"/></svg><span class="rn">Mitchell Admin</span></div>
<div class="c cdl"></div>
<div class="c cact"><span class="clk"><svg width="16" height="16" viewBox="0 0 16 16"><circle cx="8" cy="8" r="6.6" fill="none" stroke="#d2d2d2" stroke-width="1.8"/><path d="M8.3 4.2 V8.6 H5.6" fill="none" stroke="#d2d2d2" stroke-width="1.4"/></svg></span></div>
<div class="c ctot">$ 6,465.50</div>
<div class="c cst"><span class="bdg po">Purchase Order</span></div>
<div class="gap" style="left:77px"></div><div class="gap" style="left:934px"></div><div class="gap" style="left:1150px"></div><div class="gap" style="left:1408px"></div><div class="gap" style="left:1589px"></div>
</div>
<div class="rb" style="top:880px"></div>
<div class="row muted odd" style="top:881px;height:32px">
<div class="c c0"><span class="cb"></span></div><div class="c c1"><svg class="star" width="16" height="17" viewBox="0 0 16 17"><path d="M8.00 1.10 L10.41 5.38 L15.23 6.35 L11.90 9.97 L12.47 14.85 L8.00 12.80 L3.53 14.85 L4.10 9.97 L0.77 6.35 L5.59 5.38Z" fill="none" stroke="#545c68" stroke-width="1.25" stroke-linejoin="round"/></svg></div>
<div class="c cref">P00006</div><div class="c cven">Wood Corner</div>
<div class="c ccom">My Company (San Francisco)</div>
<div class="c crep"><svg class="av" width="19" height="19"><use href="#avs"/></svg><span class="rn">Mitchell Admin</span></div>
<div class="c cdl"></div>
<div class="c cact"><span class="acti"><svg width="18" height="14" viewBox="0 0 18 14"><rect x="0" y="0" width="18" height="3.6" rx="0.6" fill="#d23f3f"/><rect x="0" y="5" width="18" height="3.6" rx="0.6" fill="#d23f3f"/><rect x="0" y="10" width="18" height="3.6" rx="0.6" fill="#d23f3f"/><rect x="13" y="1.1" width="3" height="1.3" fill="#fff" opacity=".9"/><rect x="7" y="6.1" width="9" height="1.3" fill="#fff" opacity=".7"/><rect x="11" y="11.1" width="5" height="1.3" fill="#fff" opacity=".7"/></svg></span><span class="actt">Check optional products</span></div>
<div class="c ctot">$ 1,335.00</div>
<div class="c cst"><span class="bdg cn">Cancelled</span></div>
<div class="gap" style="left:77px"></div><div class="gap" style="left:934px"></div><div class="gap" style="left:1150px"></div><div class="gap" style="left:1408px"></div><div class="gap" style="left:1589px"></div>
</div>
<div class="rb" style="top:913px"></div>
<div class="row info" style="top:914px;height:32px">
<div class="c c0"><span class="cb"></span></div><div class="c c1"><svg class="star" width="16" height="17" viewBox="0 0 16 17"><path d="M8.00 1.10 L10.41 5.38 L15.23 6.35 L11.90 9.97 L12.47 14.85 L8.00 12.80 L3.53 14.85 L4.10 9.97 L0.77 6.35 L5.59 5.38Z" fill="none" stroke="#545c68" stroke-width="1.25" stroke-linejoin="round"/></svg></div>
<div class="c cref">P00005</div><div class="c cven">Deco Addict</div>
<div class="c ccom">My Company (San Francisco)</div>
<div class="c crep"><svg class="av" width="19" height="19"><use href="#avs"/></svg><span class="rn">Mitchell Admin</span></div>
<div class="c cdl"><span class="today">Today</span></div>
<div class="c cact"><span class="acti"><svg width="18" height="14" viewBox="0 0 18 14"><rect x="0" y="0" width="18" height="3.6" rx="0.6" fill="#a87716"/><rect x="0" y="5" width="18" height="3.6" rx="0.6" fill="#a87716"/><rect x="0" y="10" width="18" height="3.6" rx="0.6" fill="#a87716"/><rect x="13" y="1.1" width="3" height="1.3" fill="#fff" opacity=".9"/><rect x="7" y="6.1" width="9" height="1.3" fill="#fff" opacity=".7"/><rect x="11" y="11.1" width="5" height="1.3" fill="#fff" opacity=".7"/></svg></span><span class="actt">Get approval</span></div>
<div class="c ctot">$ 11,215.50</div>
<div class="c cst"><span class="bdg rfq">RFQ</span></div>
<div class="gap" style="left:77px"></div><div class="gap" style="left:934px"></div><div class="gap" style="left:1150px"></div><div class="gap" style="left:1408px"></div><div class="gap" style="left:1589px"></div>
</div>
<div class="rb" style="top:946px"></div>

<!-- dropdown -->
<div class="dd">
  <div class="it" style="top:11px">Export</div>
  <div class="it" style="top:37px">Delete</div>
  <div class="it" style="top:62px">Merge Orders</div>
  <div class="it" style="top:88px">Create Vendor Bills</div>
</div>

<!-- scrollbars -->
<div class="vsb"></div><div class="vth"></div>
<svg class="abs" style="left:1907px;top:136px" width="11" height="7" viewBox="0 0 11 7"><path d="M1.5 6 L5.5 2 L9.5 6Z" fill="#a3a3a3"/></svg>
<svg class="abs" style="left:1907px;top:921px" width="11" height="7" viewBox="0 0 11 7"><path d="M1.5 1.5 L5.5 5.5 L9.5 1.5Z" fill="#505050"/></svg>
<div class="hsb"></div><div class="hth"></div>
<svg class="abs" style="left:3px;top:934px" width="7" height="11" viewBox="0 0 7 11"><path d="M6 1.5 L2 5.5 L6 9.5Z" fill="#a3a3a3"/></svg>
<svg class="abs" style="left:1895px;top:934px" width="7" height="11" viewBox="0 0 7 11"><path d="M1.5 1.5 L5.5 5.5 L1.5 9.5Z" fill="#505050"/></svg>
<div class="corner"></div>
</body></html>
